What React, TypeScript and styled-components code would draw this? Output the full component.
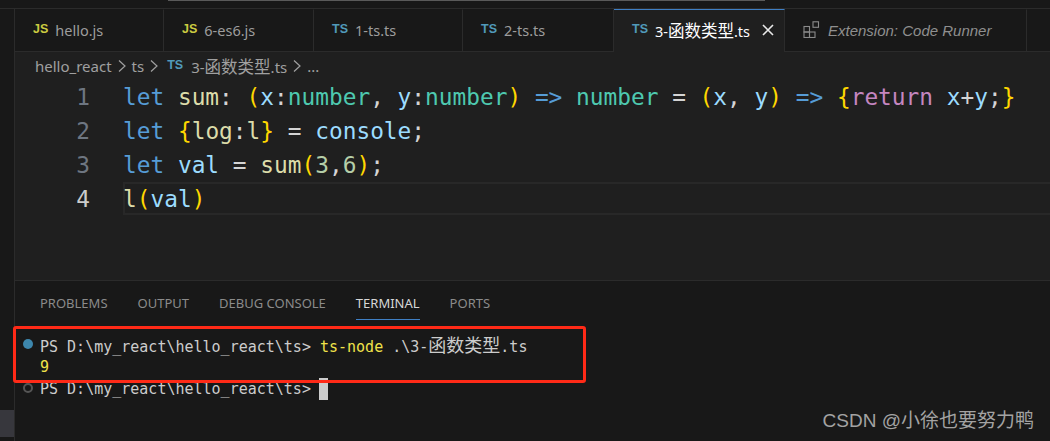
import React from "react";
import styled, { createGlobalStyle } from "styled-components";

const Global = createGlobalStyle`
  html, body { margin: 0; padding: 0; background: #181818; }
  #root { width: 1050px; height: 441px; overflow: hidden; }
`;

const Frame = styled.div`
  position: relative;
  width: 1050px;
  height: 441px;
  background: #181818;
  display: flex;
  flex-direction: column;
  overflow: hidden;
  font-family: "Noto Sans", "Noto Sans CJK SC", sans-serif;
`;

const TopStrip = styled.div`
  height: 8px;
  flex: none;
  background: #181818;
  border-bottom: 1px solid #2b2b2b;
  display: flex;
  align-items: flex-start;
  padding-left: 168px;
`;

const TopBar = styled.div`
  width: 597px;
  height: 1px;
  background: #5a5a5a;
`;

const Body = styled.div`
  flex: 1;
  display: flex;
  min-height: 0;
`;

const Activity = styled.div`
  width: 14px;
  flex: none;
  background: #181818;
  border-right: 1px solid #2b2b2b;
  display: flex;
  flex-direction: column;
  justify-content: flex-end;
  padding-bottom: 4px;
`;

const ActivityItem = styled.div`
  height: 27px;
  background: #37373d;
`;

const Main = styled.div`
  flex: 1;
  min-width: 0;
  display: flex;
  flex-direction: column;
`;

const Tabs = styled.div`
  height: 42px;
  flex: none;
  display: flex;
  background: #181818;
  border-bottom: 1px solid #2b2b2b;
`;

const Tab = styled.div<{ $w: number; $active?: boolean }>`
  width: ${(p) => p.$w}px;
  flex: none;
  box-sizing: border-box;
  display: flex;
  align-items: center;
  padding: 0 0 2px 18px;
  gap: 7px;
  height: ${(p) => (p.$active ? 43 : 42)}px;
  background: ${(p) => (p.$active ? "#1f1f1f" : "#181818")};
  border-right: 1px solid #2b2b2b;
  border-top: 1px solid ${(p) => (p.$active ? "#3f7fc4" : "transparent")};
  color: ${(p) => (p.$active ? "#ffffff" : "#9d9d9d")};
  font-size: 14.5px;
`;

const FileBadge = styled.span<{ $kind: "js" | "ts" }>`
  font-family: "Liberation Sans", sans-serif;
  font-weight: 700;
  font-size: 12.5px;
  position: relative;
  top: -1px;
  color: ${(p) => (p.$kind === "js" ? "#cbcb41" : "#519aba")};
`;

const Han = styled.span`
  font-family: "Noto Sans CJK SC", sans-serif;
  font-size: 16.5px;
`;

const ExtTitle = styled.span`
  font-family: "Liberation Sans", sans-serif;
  font-style: italic;
  color: #8f8f8f;
  font-size: 15px;
  margin: 2px 0 0 1px;
`;

const CloseMark = styled.svg`
  width: 14px;
  height: 14px;
  margin-left: 4px;
`;

const Crumbs = styled.div`
  height: 28px;
  flex: none;
  background: #1f1f1f;
  display: flex;
  align-items: center;
  padding-left: 20px;
  gap: 6px;
  color: #a0a0a0;
  font-size: 15px;
`;

const CrumbIcon = styled.span`
  font-family: "Liberation Sans", sans-serif;
  font-weight: 700;
  font-size: 12.5px;
  color: #519aba;
  margin: -3px 2px 0 3px;
`;

const Chevron = styled.svg`
  width: 8px;
  height: 14px;
`;

const Editor = styled.div`
  height: 200px;
  flex: none;
  background: #1f1f1f;
  border-bottom: 1px solid #2b2b2b;
  font-family: "DejaVu Sans Mono", monospace;
  font-size: 22.8px;
`;

const Line = styled.div`
  display: flex;
  height: 34px;
  line-height: 34px;
  white-space: pre;
`;

const Num = styled.span<{ $cur?: boolean }>`
  width: 75px;
  flex: none;
  text-align: right;
  box-sizing: border-box;
  color: ${(p) => (p.$cur ? "#cccccc" : "#6e7681")};
`;

const Code = styled.div<{ $cur?: boolean }>`
  flex: 1;
  margin-left: 33px;
  color: #d4d4d4;
  box-sizing: border-box;
  height: ${(p) => (p.$cur ? "33px" : "auto")};
  line-height: ${(p) => (p.$cur ? 30 : 34)}px;
  border: ${(p) => (p.$cur ? "2px solid #282828" : "0")};
  border-right: 0;
  text-indent: ${(p) => (p.$cur ? "-2px" : "0")};
`;

const T = styled.span<{ $c: string }>`
  color: ${(p) => p.$c};
`;

const Panel = styled.div`
  flex: 1;
  min-height: 0;
  background: #181818;
  display: flex;
  flex-direction: column;
`;

const PanelTabs = styled.div`
  display: flex;
  height: 44px;
  flex: none;
  padding-left: 25px;
  gap: 30px;
  box-sizing: border-box;
`;

const PanelTab = styled.div<{ $active?: boolean }>`
  height: 27px;
  padding: 11px 0 0;
  line-height: 22px;
  box-sizing: content-box;
  font-size: 13px;
  color: ${(p) => (p.$active ? "#d7d7d7" : "#8b8b8b")};
  box-shadow: ${(p) => (p.$active ? "0 1px 0 0 #3f7fc4" : "none")};
`;

const Term = styled.div`
  font-family: "DejaVu Sans Mono", monospace;
  font-size: 15px;
  color: #cccccc;
  padding-top: 9px;
`;

const TermLine = styled.div`
  display: flex;
  align-items: center;
  height: 22px;
  white-space: pre;
  padding-left: 25px;
`;

const TermHan = styled.span`
  font-family: "Noto Sans CJK SC", sans-serif;
  font-size: 18px;
  line-height: 22px;
`;

const TermText = styled.span`
  line-height: 22px;
`;

const Dot = styled.span<{ $hollow?: boolean }>`
  position: relative;
  left: -17px;
  margin-right: -10px;
  box-sizing: border-box;
  width: 10px;
  height: 10px;
  border-radius: 50%;
  flex: none;
  top: -1px;
  background: ${(p) => (p.$hollow ? "transparent" : "#3d87ad")};
  border: ${(p) => (p.$hollow ? "2px solid #555555" : "0")};
`;

const Yellow = styled.span`
  color: #f0e24a;
`;

const Cursor = styled.span`
  width: 9px;
  height: 22px;
  margin-left: -1px;
  background: #cccccc;
`;

const Highlight = styled.div`
  position: absolute;
  left: 13px;
  top: 326px;
  width: 573px;
  height: 57px;
  box-sizing: border-box;
  border: 3px solid #ff2a17;
  border-radius: 3px;
  pointer-events: none;
`;

const Watermark = styled.div`
  position: absolute;
  right: 16px;
  top: 410px;
  color: #a3a3a3;
  font-size: 19px;
  line-height: 22px;
  font-family: "Liberation Sans", "Noto Sans CJK SC", sans-serif;
`;

const kw = "#569cd6";
const fn = "#dcdcaa";
const ty = "#4ec9b0";
const va = "#9cdcfe";
const br = "#ffd700";
const nu = "#b5cea8";
const ctl = "#c586c0";

const Close = () => (
  <CloseMark viewBox="0 0 14 14">
    <path d="M2 2 L12 12 M12 2 L2 12" stroke="#e8e8e8" strokeWidth="1.6" fill="none" />
  </CloseMark>
);

const Sep = () => (
  <Chevron viewBox="0 0 8 14">
    <path d="M1 1.5 L7 7 L1 12.5" stroke="#a0a0a0" strokeWidth="1.2" fill="none" />
  </Chevron>
);

const ExtIcon = () => (
  <svg width="17" height="17" viewBox="0 0 17 17" fill="none" stroke="#8a8a8a" strokeWidth="1.1">
    <rect x="1" y="5.5" width="5.5" height="5.5" />
    <rect x="1" y="11" width="5.5" height="5.5" />
    <rect x="6.5" y="11" width="5.5" height="5.5" />
    <rect x="10" y="0.8" width="5.5" height="5.5" />
  </svg>
);

export default function App() {
  return (
    <Frame>
      <Global />
      <TopStrip>
        <TopBar />
      </TopStrip>
      <Body>
        <Activity>
          <ActivityItem />
        </Activity>
        <Main>
          <Tabs>
            <Tab $w={149}><FileBadge $kind="js">JS</FileBadge>hello.js</Tab>
            <Tab $w={150}><FileBadge $kind="js">JS</FileBadge>6-es6.js</Tab>
            <Tab $w={149}><FileBadge $kind="ts">TS</FileBadge>1-ts.ts</Tab>
            <Tab $w={151}><FileBadge $kind="ts">TS</FileBadge>2-ts.ts</Tab>
            <Tab $w={171} $active><FileBadge $kind="ts">TS</FileBadge><span>3-<Han>函数类型</Han>.ts</span><Close /></Tab>
            <Tab $w={242}><ExtIcon /><ExtTitle>Extension: Code Runner</ExtTitle></Tab>
          </Tabs>
          <Crumbs>
            hello_react<Sep />ts<Sep /><CrumbIcon>TS</CrumbIcon><span>3-<Han>函数类型</Han>.ts</span><Sep />...
          </Crumbs>
          <Editor>
            <Line>
              <Num>1</Num>
              <Code>
                <T $c={kw}>let</T> <T $c={fn}>sum</T>: <T $c={br}>(</T><T $c={va}>x</T>:<T $c={ty}>number</T>, <T $c={va}>y</T>:<T $c={ty}>number</T><T $c={br}>)</T> <T $c={kw}>=&gt;</T> <T $c={ty}>number</T> = <T $c={br}>(</T><T $c={va}>x</T>, <T $c={va}>y</T><T $c={br}>)</T> <T $c={kw}>=&gt;</T> <T $c={br}>{"{"}</T><T $c={ctl}>return</T> <T $c={va}>x</T>+<T $c={va}>y</T>;<T $c={br}>{"}"}</T>
              </Code>
            </Line>
            <Line>
              <Num>2</Num>
              <Code>
                <T $c={kw}>let</T> <T $c={br}>{"{"}</T><T $c={fn}>log</T>:<T $c={fn}>l</T><T $c={br}>{"}"}</T> = <T $c={va}>console</T>;
              </Code>
            </Line>
            <Line>
              <Num>3</Num>
              <Code>
                <T $c={kw}>let</T> <T $c={va}>val</T> = <T $c={fn}>sum</T><T $c={br}>(</T><T $c={nu}>3</T>,<T $c={nu}>6</T><T $c={br}>)</T>;
              </Code>
            </Line>
            <Line>
              <Num $cur>4</Num>
              <Code $cur>
                <T $c={fn}>l</T><T $c={br}>(</T><T $c={va}>val</T><T $c={br}>)</T>
              </Code>
            </Line>
          </Editor>
          <Panel>
            <PanelTabs>
              <PanelTab>PROBLEMS</PanelTab>
              <PanelTab>OUTPUT</PanelTab>
              <PanelTab>DEBUG CONSOLE</PanelTab>
              <PanelTab $active>TERMINAL</PanelTab>
              <PanelTab>PORTS</PanelTab>
            </PanelTabs>
            <Term>
              <TermLine><Dot /><TermText>PS D:\my_react\hello_react\ts&gt; <Yellow>ts-node</Yellow> .\3-<TermHan>函数类型</TermHan>.ts</TermText></TermLine>
              <TermLine><Yellow>9</Yellow></TermLine>
              <TermLine><Dot $hollow /><TermText>PS D:\my_react\hello_react\ts&gt; </TermText><Cursor /></TermLine>
            </Term>
          </Panel>
        </Main>
      </Body>
      <Highlight />
      <Watermark>CSDN @小徐也要努力鸭</Watermark>
    </Frame>
  );
}
